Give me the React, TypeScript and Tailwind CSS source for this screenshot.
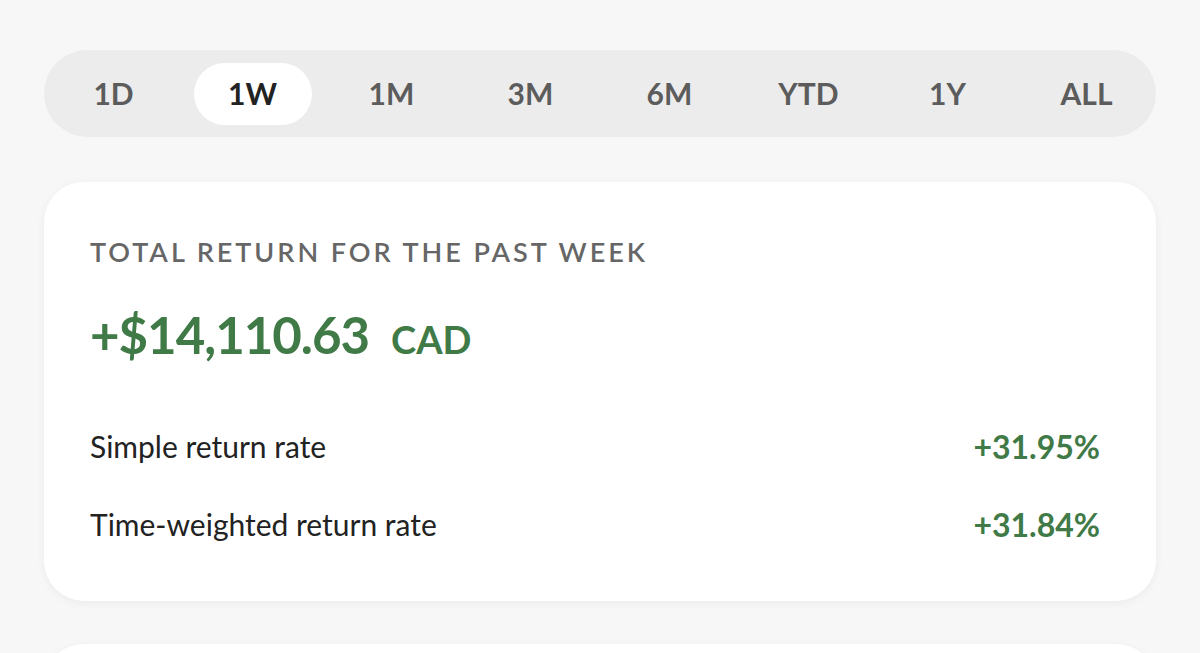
import type { FC } from "react";

const RANGES = ["1D", "1W", "1M", "3M", "6M", "YTD", "1Y", "ALL"];

const RangeTabs: FC<{ active: string }> = ({ active }) => (
	<div className="grid grid-cols-8 h-[87px] rounded-full bg-[#ececec]">
		{RANGES.map((r) => (
			<div key={r} className="flex items-center justify-center">
				<div
					className={
						r === active
							? "flex h-[62px] w-[118px] items-center justify-center rounded-full bg-white text-[#222] text-[30px] font-bold"
							: "flex h-[62px] w-[118px] items-center justify-center rounded-full text-[#5c5c5c] text-[30px] font-bold"
					}
				>
					{r}
				</div>
			</div>
		))}
	</div>
);

const ReturnRow: FC<{ label: string; value: string }> = ({ label, value }) => (
	<div className="flex items-center justify-between h-[78px]">
		<span className="text-[30px] text-[#222]">{label}</span>
		<span className="text-[32px] font-bold text-[#3f7a47]">{value}</span>
	</div>
);

export default function App() {
	return (
		<div
			className="h-[653px] overflow-hidden bg-[#f7f7f7] px-[44px] pt-[50px]"
			style={{ fontFamily: "Lato, 'Noto Sans', sans-serif" }}
		>
			<RangeTabs active="1W" />

			<section className="mt-[45px] rounded-[40px] bg-white pl-[46px] pr-[56px] pt-[50px] pb-[37px] shadow-[0_2px_10px_rgba(0,0,0,0.05)]">
				<h2 className="m-0 text-[27px] font-semibold tracking-[0.11em] text-[#666]">
					TOTAL RETURN FOR THE PAST WEEK
				</h2>
				<div className="mt-[36px] flex items-baseline gap-[22px] text-[#3f7a47] font-bold">
					<span className="text-[51px] leading-none tracking-[-0.02em]">+$14,110.63</span>
					<span className="text-[38px] leading-none">CAD</span>
				</div>
				<div className="mt-[48px]">
					<ReturnRow label="Simple return rate" value="+31.95%" />
					<ReturnRow label="Time-weighted return rate" value="+31.84%" />
				</div>
			</section>

			<div className="mt-[43px] h-[40px] rounded-t-[40px] bg-white shadow-[0_2px_10px_rgba(0,0,0,0.05)]" />
		</div>
	);
}
